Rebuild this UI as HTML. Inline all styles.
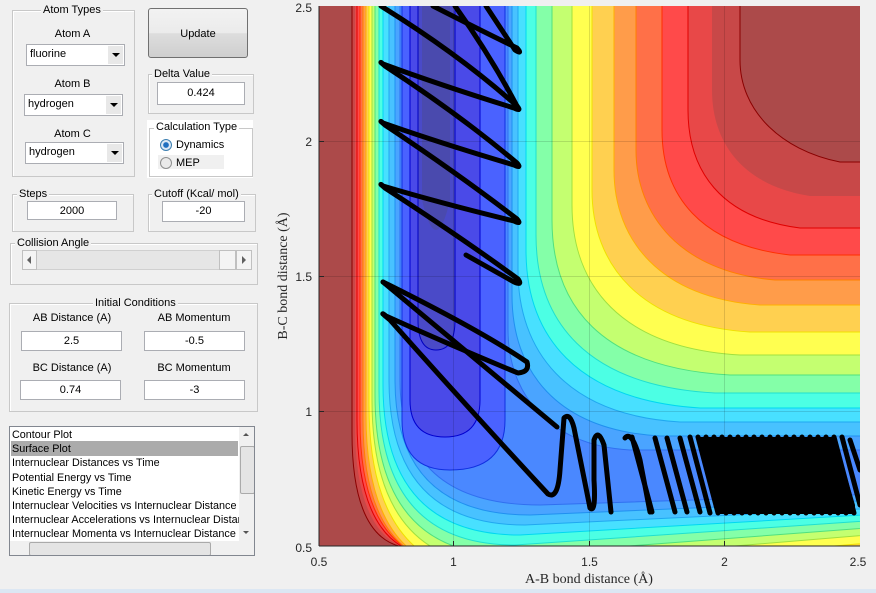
<!DOCTYPE html>
<html><head><meta charset="utf-8"><style>
body{margin:0;width:876px;height:593px;background:#f0f0f0;position:relative;overflow:hidden;font-family:"Liberation Sans",sans-serif;font-size:11px;color:#000}
.a{position:absolute}
.grp{position:absolute;border:1px solid #c8c8c8;box-shadow:1px 1px 0 #fff inset}
.t{position:absolute;background:#f0f0f0;padding:0 2px;white-space:nowrap;line-height:13px}
.inp{position:absolute;background:#fff;border:1px solid #abadb3;text-align:center;line-height:18px;box-sizing:border-box}
.sel{position:absolute;background:#fff;border:1px solid #abadb3;box-sizing:border-box;line-height:19px;padding-left:3px}
.sel i{position:absolute;right:1px;top:1px;bottom:1px;width:15px;background:#e8e8e8}
.sel i:after{content:"";position:absolute;left:4px;top:7px;border-left:4px solid transparent;border-right:4px solid transparent;border-top:4px solid #000}
.lab{position:absolute;text-align:center;line-height:13px}
</style></head><body>

<div class="grp" style="left:12px;top:10px;width:121px;height:165px"></div>
<div class="t" style="left:41px;top:4px">Atom Types</div>
<div class="lab" style="left:12px;width:121px;top:28px">Atom A</div>
<div class="sel" style="left:26px;top:44px;width:99px;height:22px">fluorine<i></i></div>
<div class="lab" style="left:12px;width:121px;top:78px">Atom B</div>
<div class="sel" style="left:24px;top:94px;width:99px;height:22px">hydrogen<i></i></div>
<div class="lab" style="left:12px;width:121px;top:128px">Atom C</div>
<div class="sel" style="left:25px;top:142px;width:99px;height:22px">hydrogen<i></i></div>

<div class="a" style="left:148px;top:8px;width:100px;height:50px;border:1px solid #707070;border-radius:3px;background:linear-gradient(#f2f2f2,#ebebeb 50%,#dddddd 51%,#cfcfcf);box-sizing:border-box;text-align:center;line-height:50px">Update</div>

<div class="grp" style="left:148px;top:74px;width:104px;height:38px"></div>
<div class="t" style="left:152px;top:68px">Delta Value</div>
<div class="inp" style="left:157px;top:82px;width:88px;height:23px;line-height:21px">0.424</div>

<div class="a" style="left:147px;top:120px;width:106px;height:58px;background:#fff"></div>
<div class="grp" style="left:149px;top:128px;width:102px;height:47px;box-shadow:none"></div>
<div class="t" style="left:154px;top:121px;background:#fff">Calculation Type</div>
<div class="a" style="left:158px;top:155px;width:66px;height:14px;background:#f0f0f0"></div>
<div class="a" style="left:160px;top:139px;width:10px;height:10px;border-radius:50%;border:1px solid #3c7fb1;background:radial-gradient(#1f6fc0 35%,#dbe8f5 45%)"></div>
<div class="a" style="left:176px;top:139px;line-height:13px">Dynamics</div>
<div class="a" style="left:160px;top:157px;width:10px;height:10px;border-radius:50%;border:1px solid #8e8f8f;background:#eaeaea"></div>
<div class="a" style="left:176px;top:157px;line-height:13px">MEP</div>

<div class="grp" style="left:12px;top:194px;width:120px;height:36px"></div>
<div class="t" style="left:17px;top:188px">Steps</div>
<div class="inp" style="left:27px;top:201px;width:90px;height:19px">2000</div>

<div class="grp" style="left:148px;top:194px;width:106px;height:36px"></div>
<div class="t" style="left:152px;top:188px">Cutoff (Kcal/ mol)</div>
<div class="inp" style="left:162px;top:201px;width:83px;height:21px;line-height:19px">-20</div>

<div class="grp" style="left:10px;top:243px;width:246px;height:40px"></div>
<div class="t" style="left:15px;top:237px">Collision Angle</div>
<div class="a" style="left:22px;top:250px;width:230px;height:20px;background:#e6e6e6;border:1px solid #d0d0d0;box-sizing:border-box"></div>
<div class="a" style="left:22px;top:250px;width:15px;height:20px;background:#f4f4f4;border:1px solid #c0c0c0;box-sizing:border-box"></div>
<div class="a" style="left:27px;top:256px;border-top:4px solid transparent;border-bottom:4px solid transparent;border-right:4px solid #606060"></div>
<div class="a" style="left:219px;top:250px;width:17px;height:20px;background:#f4f4f4;border:1px solid #c0c0c0;box-sizing:border-box"></div>
<div class="a" style="left:236px;top:250px;width:16px;height:20px;background:#f4f4f4;border:1px solid #c0c0c0;box-sizing:border-box"></div>
<div class="a" style="left:242px;top:256px;border-top:4px solid transparent;border-bottom:4px solid transparent;border-left:4px solid #606060"></div>

<div class="grp" style="left:9px;top:303px;width:247px;height:107px"></div>
<div class="t" style="left:93px;top:297px">Initial Conditions</div>
<div class="lab" style="left:12px;width:120px;top:312px">AB Distance (A)</div>
<div class="lab" style="left:134px;width:120px;top:312px">AB Momentum</div>
<div class="inp" style="left:21px;top:331px;width:101px;height:20px">2.5</div>
<div class="inp" style="left:144px;top:331px;width:101px;height:20px">-0.5</div>
<div class="lab" style="left:12px;width:120px;top:362px">BC Distance (A)</div>
<div class="lab" style="left:134px;width:120px;top:362px">BC Momentum</div>
<div class="inp" style="left:20px;top:380px;width:101px;height:20px">0.74</div>
<div class="inp" style="left:144px;top:380px;width:101px;height:20px">-3</div>

<div class="a" style="left:9px;top:426px;width:246px;height:130px;background:#fff;border:1px solid #828790;box-sizing:border-box;overflow:hidden">
 <div style="position:absolute;left:1px;top:14px;width:227px;height:15px;background:#ababab"></div>
 <div style="position:absolute;left:2px;top:1px;line-height:14.2px;white-space:nowrap;font-size:10.8px">Contour Plot<br>Surface Plot<br>Internuclear Distances vs Time<br>Potential Energy vs Time<br>Kinetic Energy vs Time<br>Internuclear Velocities vs Internuclear Distance<br>Internuclear Accelerations vs Internuclear Distance<br>Internuclear Momenta vs Internuclear Distance</div>
 <div style="position:absolute;left:229px;top:0;width:16px;height:114px;background:#f0f0f0"></div>
 <div style="position:absolute;left:233px;top:6px;border-left:3px solid transparent;border-right:3px solid transparent;border-bottom:3px solid #555"></div>
 <div style="position:absolute;left:233px;top:104px;border-left:3px solid transparent;border-right:3px solid transparent;border-top:3px solid #555"></div>
 <div style="position:absolute;left:230px;top:19px;width:13px;height:46px;background:#e4e4e4;border:1px solid #aaa;border-radius:2px"></div>
 <div style="position:absolute;left:0;top:114px;width:245px;height:15px;background:#f0f0f0"></div>
 <div style="position:absolute;left:19px;top:115px;width:180px;height:12px;background:#e4e4e4;border:1px solid #aaa;border-radius:2px"></div>
</div>

<div class="a" style="left:0;top:589px;width:876px;height:4px;background:#dce7f3"></div>

<svg class="a" style="left:0;top:0" width="876" height="593" xmlns="http://www.w3.org/2000/svg">
<defs><clipPath id="c"><rect x="319" y="6" width="541" height="540"/></clipPath></defs>
<g clip-path="url(#c)" stroke-width="1">
<rect x="319" y="6" width="541" height="540" fill="#ac4a4a"/>
<path fill="#c84848" stroke="#8a0000" d="M352,0 L352,433 Q352,548 414,548 L880,548 L880,162 L840,162 C780,150 740,110 740,60 L740,0Z"/>
<path fill="#e84848" stroke="none" d="M355,0 L355,425 Q355,552 428,552 L880,552 L880,196 L810,196 C740,185 712,140 712,90 L712,0Z"/>
<path fill="#ff4a4a" stroke="#e00000" d="M357,0 L357,420 Q357,556 440,556 L880,556 L880,228 L800,228 C720,218 688,170 688,110 L688,0Z"/>
<path fill="#ff7048" stroke="#ff3000" d="M360,0 L360,420 Q360,560 452,560 L880,560 L880,255 L790,255 C700,245 662,195 662,130 L662,0Z"/>
<path fill="#ff9c4a" stroke="#ff8000" d="M363,0 L363,420 Q363,566 465,566 L880,566 L880,280 L775,280 C680,272 636,215 636,150 L636,0Z"/>
<path fill="#ffd050" stroke="#ffb000" d="M366,0 L366,415 Q366,572 480,572 L880,572 L880,305 L760,305 C660,298 614,240 614,170 L614,0Z"/>
<path fill="#ffff50" stroke="#f0e000" d="M369,0 L369,405 Q369,575 500,575 L880,542 L880,332 L750,332 C640,325 592,265 592,190 L592,0Z"/>
<path fill="#c4ff70" stroke="#a0e040" d="M372,0 L372,400 Q372,565 505,565 L880,534 L880,355 L740,355 C620,348 572,285 572,205 L572,0Z"/>
<path fill="#84ffa8" stroke="#50e080" d="M375,0 L375,395 Q375,555 510,555 L880,527 L880,375 L730,375 C600,368 552,305 552,220 L552,0Z"/>
<path fill="#4cffe4" stroke="#20e0d0" d="M379,0 L379,390 Q379,545 515,545 L880,520 L880,393 L715,393 C585,386 536,320 536,235 L536,0Z"/>
<path fill="#48e0ff" stroke="#00d8f0" d="M383,0 L383,385 Q383,535 520,535 L880,514 L880,408 L700,408 C575,400 526,335 526,250 L526,0Z"/>
<path fill="#48c2ff" stroke="#20a8f0" d="M389,0 L389,380 Q389,525 525,525 L880,508 L880,422 L680,422 C565,415 518,350 518,270 L518,0Z"/>
<path fill="#4aa4ff" stroke="#2090f0" d="M395,0 L395,380 Q395,515 530,515 L880,500 L880,436 L660,436 C555,430 512,370 512,295 L512,0Z"/>
<path fill="#4a88ff" stroke="#3070f0" d="M400,0 L400,380 Q400,505 540,505 L880,494 L880,450 L630,450 C545,445 508,390 508,330 L508,0Z"/>
<path fill="#4a62ff" stroke="#1030e0" d="M402,0 L402,420 Q402,470 450,470 Q505,470 505,420 L505,0Z"/>
<path fill="#4a4ae8" stroke="#0000d0" d="M410,0 L410,400 Q410,437 445,437 Q480,437 480,400 L480,0Z"/>
<path fill="#4a4ac8" stroke="#0000c0" d="M418,0 L418,320 Q418,350 436,350 Q455,350 455,320 L455,0Z"/>
<path fill="#4a4aae" stroke="none" d="M422,0 L422,200 Q436,260 450,200 L450,0Z"/>
<g stroke="#000" stroke-opacity="0.13">
<line x1="453.5" y1="6" x2="453.5" y2="546"/><line x1="589.5" y1="6" x2="589.5" y2="546"/><line x1="724.5" y1="6" x2="724.5" y2="546"/>
<line x1="319" y1="141.5" x2="860" y2="141.5"/><line x1="319" y1="276.5" x2="860" y2="276.5"/><line x1="319" y1="411.5" x2="860" y2="411.5"/>
</g>
<g fill="none" stroke="#000" stroke-width="5" stroke-linejoin="round" stroke-linecap="round">
<path d="M381,6 Q460,55 517,106 Q522,112 514,108 Q440,85 383,64 Q378,60 385,66 Q460,115 517,163 Q522,169 514,165 Q440,143 383,123 Q378,119 385,125 Q460,175 517,219 Q522,225 514,221 Q440,203 383,186 Q378,182 385,188 Q465,240 518,279 Q523,286 514,282 L466,255"/>
<path d="M433,6 Q480,30 517,48 Q523,55 515,50 L486,6"/>
<path d="M455,6 Q490,55 517,106"/>
<path d="M383,282 Q480,330 527,362 Q530,372 518,373 Q450,345 386,316 Q378,310 390,320 Q470,410 548,494 Q558,500 560,470 L564,418 Q570,412 574,428 L590,508 Q596,514 594,480 L594,440 Q598,428 604,445 L611,512"/>
<path d="M383,282 L557,427"/>
<path d="M625,438 Q632,430 640,460 L650,512 M655,438 L675,512 M667,438 L687,512 M680,438 L700,512 M632,437 L652,512"/>
<path d="M690,437 L710,513 M698,437 L718,513 M706,437 L726,513 M714,437 L734,513 M722,437 L742,513 M730,437 L750,513 M738,437 L758,513 M746,437 L766,513 M754,437 L774,513 M762,437 L782,513 M770,437 L790,513 M778,437 L798,513 M786,437 L806,513 M794,437 L814,513 M802,437 L822,513 M810,437 L830,513 M818,437 L838,513 M826,437 L846,513 M834,437 L854,513 M842,437 L860,505 M850,440 L860,470"/>
</g>
<path fill="#000" d="M700,437 L835,437 L855,505 L855,514 L720,514Z"/>
</g>
<g stroke="#262626" stroke-width="1">
<line x1="319" y1="6" x2="319" y2="546"/><line x1="319" y1="546" x2="860" y2="546"/>
<line x1="319" y1="141.5" x2="324" y2="141.5"/><line x1="319" y1="276.5" x2="324" y2="276.5"/><line x1="319" y1="411.5" x2="324" y2="411.5"/>
<line x1="453.5" y1="546" x2="453.5" y2="541"/><line x1="589.5" y1="546" x2="589.5" y2="541"/><line x1="724.5" y1="546" x2="724.5" y2="541"/>
</g>
<g font-family="Liberation Sans, sans-serif" font-size="12" fill="#262626">
<text x="312" y="12" text-anchor="end">2.5</text>
<text x="312" y="146" text-anchor="end">2</text>
<text x="312" y="281" text-anchor="end">1.5</text>
<text x="312" y="416" text-anchor="end">1</text>
<text x="312" y="552" text-anchor="end">0.5</text>
<text x="319" y="566" text-anchor="middle">0.5</text>
<text x="453.5" y="566" text-anchor="middle">1</text>
<text x="589.5" y="566" text-anchor="middle">1.5</text>
<text x="724.5" y="566" text-anchor="middle">2</text>
<text x="858" y="566" text-anchor="middle">2.5</text>
</g>
<g font-family="Liberation Serif, serif" font-size="14" fill="#262626">
<text x="589" y="583" text-anchor="middle">A-B bond distance (Å)</text>
<text transform="translate(287,276) rotate(-90)" text-anchor="middle">B-C bond distance (Å)</text>
</g>
</svg>
</body></html>
